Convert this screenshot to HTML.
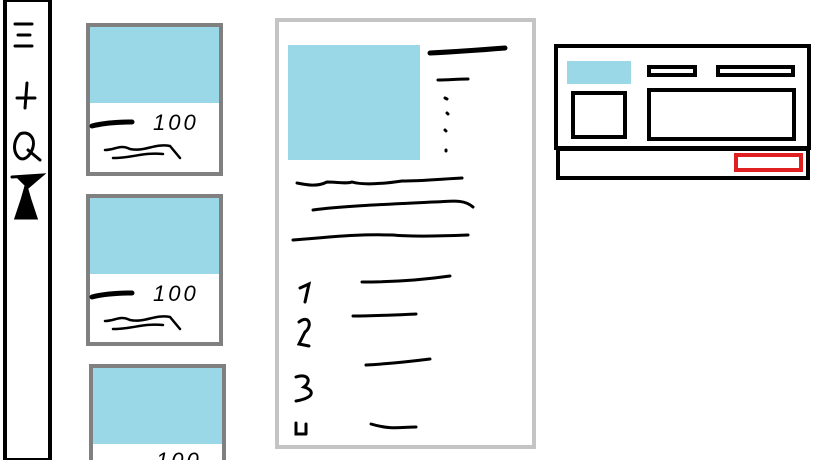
<!DOCTYPE html>
<html><head><style>
html,body{margin:0;width:819px;height:460px;overflow:hidden}
body{background:#fff;position:relative;font-family:"Liberation Sans",sans-serif}
.a{position:absolute;box-sizing:border-box}
.card{border:4px solid #808080}
.blue{background:#9ad8e8}
.n{position:absolute;font-style:italic;font-size:22px;letter-spacing:3px;color:#000;line-height:1}
</style></head><body>
<div class="a" style="left:3px;top:-2px;width:49px;height:464px;border:4px solid #000"></div>
<div class="a card" style="left:86px;top:23px;width:137px;height:153px"></div>
<div class="a blue" style="left:90px;top:27px;width:129px;height:76px"></div>
<div class="a card" style="left:86px;top:194px;width:137px;height:152px"></div>
<div class="a blue" style="left:90px;top:198px;width:129px;height:76px"></div>
<div class="a card" style="left:89px;top:364px;width:137px;height:110px"></div>
<div class="a blue" style="left:93px;top:368px;width:129px;height:76px"></div>
<div class="n" style="left:153px;top:112px">100</div>
<div class="n" style="left:153px;top:283px">100</div>
<div class="n" style="left:156px;top:450px">100</div>
<svg class="a" style="left:0;top:0" width="819" height="460" fill="none" stroke="#000" stroke-width="3" stroke-linecap="round">
<path d="M15 24h17M18 35h12M15 46h17"/>
<path d="M17 98h18M27 83l-2 25"/>
<path d="M20 134c-14 14 2 38 12 16c5-12-4-20-12-16M28 150l12 10"/>
<path d="M12 177l30 -2l-14 12l-10 -10M26 186l-4 14l-6 18h20l-6 -18z" fill="#000"/>
<path d="M92 126c8-2 22-4 40-4" stroke-width="5"/>
<path d="M105 150c10 0 15 -6 25 -1c15 3 25 -6 40 -3l10 12M113 158c20 0 30 -6 50 -4" stroke-width="2.5"/>
<path d="M92 297c8-2 22-4 40-4" stroke-width="5"/>
<path d="M105 321c10 0 15 -6 25 -1c15 3 25 -6 40 -3l10 12M113 329c20 0 30 -6 50 -4" stroke-width="2.5"/>
<path d="M430 53c20-1 50-3 75-5" stroke-width="5"/>
<path d="M438 80c10 0 20-1 30-1M445 98l2 1M447 113l1 1M445 130l1 1M446 150v1"/>
<path d="M297 183c10 2 20 4 30-1c10 0 20 2 25 0c10 3 30 2 50 -1c20 0 40-2 60-3M313 210c30-4 80-6 120-8c15 0 30-4 40 5M293 240c40-3 60-6 100-5c20 2 50 1 75 0M362 282c30 0 60-2 88-6M353 316c20 0 40-1 63-2M366 365c20-1 40-3 64-6M371 424c20 6 30 3 45 3"/>
<path d="M300 288l9-4l-4 18M299 322c10-8 14 4 6 10l-6 12l10 2M296 377c12-4 16 4 8 10c8 2 14 10 -8 14M296 423v11h10M306 424v10"/>
</svg>
<div class="a" style="left:275px;top:18px;width:261px;height:431px;border:4px solid #c4c4c4"></div>
<div class="a blue" style="left:288px;top:45px;width:132px;height:115px"></div>
<div class="a" style="left:554px;top:44px;width:257px;height:106px;border:4px solid #000"></div>
<div class="a" style="left:556px;top:147px;width:254px;height:33px;border:4px solid #000"></div>
<div class="a blue" style="left:567px;top:61px;width:64px;height:23px"></div>
<div class="a" style="left:571px;top:91px;width:56px;height:48px;border:4px solid #000"></div>
<div class="a" style="left:647px;top:88px;width:149px;height:53px;border:4px solid #000"></div>
<div class="a" style="left:647px;top:65px;width:50px;height:12px;border:4px solid #000"></div>
<div class="a" style="left:716px;top:65px;width:79px;height:12px;border:4px solid #000"></div>
<div class="a" style="left:734px;top:153px;width:69px;height:19px;border:4px solid #e02020"></div>
</body></html>
